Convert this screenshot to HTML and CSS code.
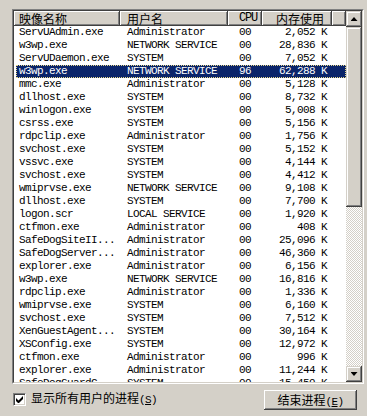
FILE: index.html
```html
<!DOCTYPE html>
<html lang="zh-CN">
<head>
    <meta charset="UTF-8">
    <meta name="viewport" content="width=device-width, initial-scale=1.0">
    <title>Windows 任务管理器 - 进程</title>
    <link rel="stylesheet" href="styles.css">
</head>
<body>
    <div class="listview">
        <div class="listview-inner">
            <div class="list-main">
                <div class="list-header">
                    <div class="col-head head-name cjk">映像名称</div>
                    <div class="col-head head-user cjk">用户名</div>
                    <div class="col-head head-cpu">CPU</div>
                    <div class="col-head head-mem cjk">内存使用</div>
                    <div class="col-head"></div>
                </div>
                <div class="rows">
                    <div class="row"><span>ServUAdmin.exe</span><span>Administrator</span><span>00</span><span class="mem">2,052 K</span></div>
                    <div class="row"><span>w3wp.exe</span><span>NETWORK SERVICE</span><span>00</span><span class="mem">28,836 K</span></div>
                    <div class="row"><span>ServUDaemon.exe</span><span>SYSTEM</span><span>00</span><span class="mem">7,052 K</span></div>
                    <div class="row selected"><span>w3wp.exe</span><span>NETWORK SERVICE</span><span>96</span><span class="mem">62,288 K</span></div>
                    <div class="row"><span>mmc.exe</span><span>Administrator</span><span>00</span><span class="mem">5,128 K</span></div>
                    <div class="row"><span>dllhost.exe</span><span>SYSTEM</span><span>00</span><span class="mem">8,732 K</span></div>
                    <div class="row"><span>winlogon.exe</span><span>SYSTEM</span><span>00</span><span class="mem">5,008 K</span></div>
                    <div class="row"><span>csrss.exe</span><span>SYSTEM</span><span>00</span><span class="mem">5,156 K</span></div>
                    <div class="row"><span>rdpclip.exe</span><span>Administrator</span><span>00</span><span class="mem">1,756 K</span></div>
                    <div class="row"><span>svchost.exe</span><span>SYSTEM</span><span>00</span><span class="mem">5,152 K</span></div>
                    <div class="row"><span>vssvc.exe</span><span>SYSTEM</span><span>00</span><span class="mem">4,144 K</span></div>
                    <div class="row"><span>svchost.exe</span><span>SYSTEM</span><span>00</span><span class="mem">4,412 K</span></div>
                    <div class="row"><span>wmiprvse.exe</span><span>NETWORK SERVICE</span><span>00</span><span class="mem">9,108 K</span></div>
                    <div class="row"><span>dllhost.exe</span><span>SYSTEM</span><span>00</span><span class="mem">7,700 K</span></div>
                    <div class="row"><span>logon.scr</span><span>LOCAL SERVICE</span><span>00</span><span class="mem">1,920 K</span></div>
                    <div class="row"><span>ctfmon.exe</span><span>Administrator</span><span>00</span><span class="mem">408 K</span></div>
                    <div class="row"><span>SafeDogSiteII...</span><span>Administrator</span><span>00</span><span class="mem">25,096 K</span></div>
                    <div class="row"><span>SafeDogServer...</span><span>Administrator</span><span>00</span><span class="mem">46,360 K</span></div>
                    <div class="row"><span>explorer.exe</span><span>Administrator</span><span>00</span><span class="mem">6,156 K</span></div>
                    <div class="row"><span>w3wp.exe</span><span>NETWORK SERVICE</span><span>00</span><span class="mem">16,816 K</span></div>
                    <div class="row"><span>rdpclip.exe</span><span>Administrator</span><span>00</span><span class="mem">1,336 K</span></div>
                    <div class="row"><span>wmiprvse.exe</span><span>SYSTEM</span><span>00</span><span class="mem">6,160 K</span></div>
                    <div class="row"><span>svchost.exe</span><span>SYSTEM</span><span>00</span><span class="mem">7,512 K</span></div>
                    <div class="row"><span>XenGuestAgent...</span><span>SYSTEM</span><span>00</span><span class="mem">30,164 K</span></div>
                    <div class="row"><span>XSConfig.exe</span><span>SYSTEM</span><span>00</span><span class="mem">12,972 K</span></div>
                    <div class="row"><span>ctfmon.exe</span><span>Administrator</span><span>00</span><span class="mem">996 K</span></div>
                    <div class="row"><span>explorer.exe</span><span>Administrator</span><span>00</span><span class="mem">11,244 K</span></div>
                    <div class="row"><span>SafeDogGuardC...</span><span>SYSTEM</span><span>00</span><span class="mem">15,459 K</span></div>
                </div>
            </div>
            <div class="scrollbar">
                <div class="sb-btn"><span class="arrow arrow-up"></span></div>
                <div class="sb-thumb"></div>
                <div class="sb-track"></div>
                <div class="sb-btn"><span class="arrow arrow-down"></span></div>
            </div>
        </div>
    </div>

    <div class="footer">
        <label class="check">
            <span class="box">
                <svg width="9" height="9" viewBox="0 0 9 9"><path d="M1 3v3l2 2h1l4-4V1L3.5 5.5z" fill="#000"/></svg>
            </span>
            <span class="check-text">显示所有用户的进程<span class="mono">(<u>S</u>)</span></span>
        </label>
        <button type="button" class="end-btn">结束进程<span class="mono">(<u>E</u>)</span></button>
    </div>
</body>
</html>
```

FILE: styles.css
```css
body {
    margin: 0;
    padding: 9px 0 0 12px;
    background-color: #d4d0c8;
    font-family: "Liberation Mono", "DejaVu Sans Mono", monospace;
    font-size: 11px;
    letter-spacing: -0.6px;
    color: #000;
}
.cjk, .check-text, .end-btn {
    font-family: "Noto Sans CJK SC", "Noto Sans", sans-serif;
    font-size: 12px;
    letter-spacing: 0;
}
.mono {
    font-family: "Liberation Mono", monospace;
    font-size: 11px;
    letter-spacing: -0.6px;
}
.head-cpu { font-size: 12px; letter-spacing: -1.2px; }

/* sunken list box */
.listview {
    width: 350px;
    height: 373px;
    border: 1px solid;
    border-color: #808080 #fff #fff #808080;
}
.listview-inner {
    display: flex;
    height: 371px;
    border: 1px solid;
    border-color: #404040 #d4d0c8 #d4d0c8 #404040;
    background-color: #fff;
}
.list-main {
    width: 332px;
    display: flex;
    flex-direction: column;
    overflow: hidden;
}

/* column headers */
.list-header {
    display: grid;
    grid-template-columns: 106px 108px 34px 70px 14px;
    height: 15px;
}
.col-head {
    background-color: #d4d0c8;
    box-shadow: inset -1px -1px #404040, inset 1px 1px #fff, inset -2px -2px #808080;
    line-height: 15px;
    white-space: nowrap;
    overflow: hidden;
}
.head-name { padding-left: 5px; }
.head-user { padding-left: 7px; }
.head-cpu { padding-left: 11px; }
.head-mem { text-align: right; padding-right: 8px; }

/* process rows */
.rows {
    flex: 1;
    overflow: hidden;
}
.row {
    display: grid;
    grid-template-columns: 104px 108px 34px 70px;
    margin-left: 2px;
    height: 13px;
    line-height: 13px;
    white-space: pre;
}
.row span { overflow: hidden; }
.row span:nth-child(1) { padding-left: 3px; }
.row span:nth-child(2) { padding-left: 7px; }
.row span:nth-child(3) { padding-left: 11px; }
.row .mem { text-align: right; padding-right: 5px; }
.row.selected {
    background-color: #0a246a;
    color: #fff;
    outline: 1px dotted #e8d88a;
    outline-offset: -1px;
}

/* scrollbar */
.scrollbar {
    width: 16px;
    display: flex;
    flex-direction: column;
}
.sb-btn, .sb-thumb {
    background-color: #d4d0c8;
    box-shadow: inset -1px -1px #404040, inset 1px 1px #d4d0c8, inset -2px -2px #808080, inset 2px 2px #fff;
}
.sb-btn {
    height: 16px;
    display: flex;
    align-items: center;
    justify-content: center;
}
.sb-thumb { height: 180px; }
.sb-track {
    flex: 1;
    background-color: #fff;
    background-image: conic-gradient(#d4d0c8 25%, #fff 0 50%, #d4d0c8 0 75%, #fff 0);
    background-size: 2px 2px;
}
.arrow {
    width: 7px;
    height: 4px;
    background-color: #000;
}
.arrow-up { clip-path: polygon(50% 0, 100% 100%, 0 100%); }
.arrow-down { clip-path: polygon(0 0, 100% 0, 50% 100%); }

/* bottom bar */
.footer {
    display: flex;
    justify-content: space-between;
    align-items: flex-start;
    width: 345px;
    margin-top: 6px;
}
.check {
    display: flex;
    align-items: center;
    gap: 5px;
    margin: 1px 0 0 1px;
    line-height: 13px;
}
.box {
    width: 13px;
    height: 13px;
    box-sizing: border-box;
    border: 1px solid;
    border-color: #808080 #fff #fff #808080;
    box-shadow: inset 1px 1px #404040, inset -1px -1px #d4d0c8;
    background-color: #fff;
    display: flex;
    align-items: center;
    justify-content: center;
}
.box svg { display: block; }
.end-btn {
    width: 93px;
    height: 20px;
    padding: 0;
    border: none;
    background-color: #d4d0c8;
    box-shadow: inset -1px -1px #404040, inset 1px 1px #fff, inset -2px -2px #808080;
    color: #000;
    line-height: 20px;
}
```
